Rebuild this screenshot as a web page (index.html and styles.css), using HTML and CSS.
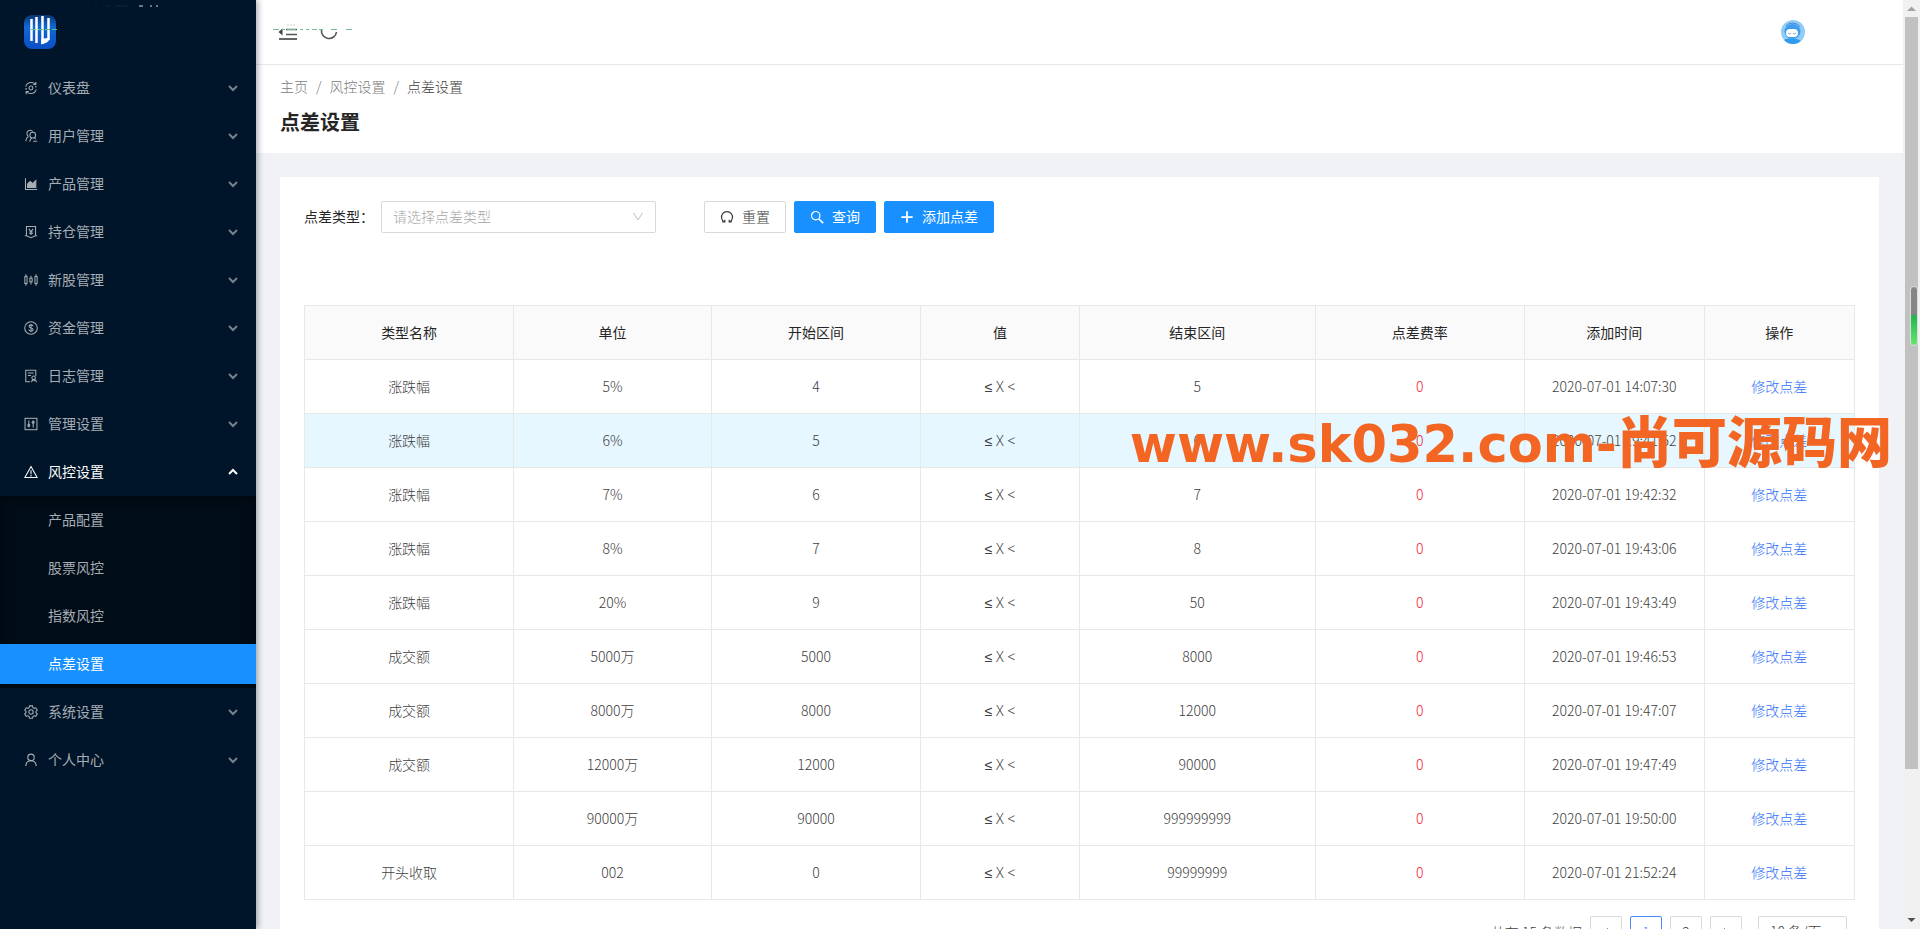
FILE: index.html
```html
<!DOCTYPE html>
<html lang="zh-CN">
<head>
<meta charset="utf-8">
<title>点差设置</title>
<link rel="stylesheet" href="styles.css">
</head>
<body>
<svg class="sprite" aria-hidden="true">
  <symbol id="down" viewBox="0 0 10 10"><path d="M1 3l4 4 4-4" fill="none" stroke="currentColor" stroke-width="2"/></symbol>
  <symbol id="up" viewBox="0 0 10 10"><path d="M1 7l4-4 4 4" fill="none" stroke="currentColor" stroke-width="2"/></symbol>
</svg>
<div class="app">
  <aside class="sidebar">
    <div class="brand">
      <svg class="logo" viewBox="0 0 36 38" aria-hidden="true">
        <defs><linearGradient id="blue" x1="0" y1="0" x2="0" y2="1"><stop offset="0" stop-color="#08366f"/><stop offset=".35" stop-color="#1268d8"/><stop offset="1" stop-color="#0b4fc4"/></linearGradient></defs>
        <rect x="2" y="2" width="32" height="34" rx="8" fill="url(#blue)"/>
        <path d="M9.500 6v22M14.500 4v26M20.500 3v28M26.500 5v22" fill="none" stroke="#fff" stroke-width="2.500"/>
        <path d="M19.300 26l6-1 2.500 1.500-3 3-5.500 2z" fill="#fff"/>
        <path d="M9 16.500h29" stroke="#5fbf7c" stroke-width="1" stroke-dasharray="5 2"/>
      </svg>
      <svg class="brand-mark" viewBox="0 0 64 4" aria-hidden="true"><path d="M0 2h2m10 0h3m5 0h12" stroke="#0f2a42"/><path d="M44 2h4m7 0h2m4 0h2" stroke="#8796a3" stroke-width="1.500"/></svg>
    </div>
    <nav class="menu">
      <button class="item"><svg class="ico" viewBox="0 0 16 16"><circle cx="8" cy="8" r="2.200"/><path d="M2 6.500C3 3 6 1.500 9 1.800c2 .2 3.500 1 4.500 2.200M13.500 1v3h-3M14 9.500C13 13 10 14.500 7 14.200c-2-.2-3.500-1-4.500-2.200M2.500 15v-3h3M1.500 9h2M14.500 6.500h-2"/></svg><span>仪表盘</span><svg class="arrow"><use href="#down"/></svg></button>
      <button class="item"><svg class="ico" viewBox="0 0 16 16"><path d="M2 14c.2-3 1.400-4.500 3-5.500M5 8.500C3 7 2.800 4 4.500 2.500S9 1 10 3"/><circle cx="10" cy="7" r="3.300"/><path d="M6.500 14.500c.2-2.500 1-3.500 2.500-4.300M10.500 14h4.500M12 10l1.500 1.500"/></svg><span>用户管理</span><svg class="arrow"><use href="#down"/></svg></button>
      <button class="item"><svg class="ico" viewBox="0 0 16 16"><path d="M1.700 1.500v12.800H15"/><path d="M4 12V8l3-3 3 2.500L13.500 4v8z" fill="currentColor"/></svg><span>产品管理</span><svg class="arrow"><use href="#down"/></svg></button>
      <button class="item"><svg class="ico" viewBox="0 0 16 16"><path d="M2.800 12V1.700h10.400V12M1 12.200h2l5 2.300 5-2.300h2M5.500 4.500L8 7.500l2.500-3M8 7.500v4M6 8h4M6 9.800h4"/></svg><span>持仓管理</span><svg class="arrow"><use href="#down"/></svg></button>
      <button class="item"><svg class="ico" viewBox="0 0 16 16"><rect x="1" y="4" width="2.500" height="8"/><rect x="6.700" y="6" width="2.600" height="4"/><rect x="12.500" y="4" width="2.500" height="8"/><path d="M2.200 1.500V4M2.200 12v2.500M8 3v3M8 10v3M13.700 1.500V4M13.700 12v2.500"/></svg><span>新股管理</span><svg class="arrow"><use href="#down"/></svg></button>
      <button class="item"><svg class="ico" viewBox="0 0 16 16"><circle cx="8" cy="8" r="7.200"/><path d="M10.300 6c-.2-1.200-1-1.600-2.300-1.600S5.700 5 5.700 6.100c0 2.600 4.700 1.200 4.700 3.800 0 1.200-1 1.700-2.400 1.700S5.700 11 5.600 9.800M8 3.300v9.400"/></svg><span>资金管理</span><svg class="arrow"><use href="#down"/></svg></button>
      <button class="item"><svg class="ico" viewBox="0 0 16 16"><path d="M7 14.500H2v-13h11.500V8M4.500 4.500H11M4.500 7.500H8"/><circle cx="11" cy="10" r="2"/><path d="M8.500 15l1.500-3.300M14.500 15L12 11.500M9.500 13.500l1.500-1 1.500 1"/></svg><span>日志管理</span><svg class="arrow"><use href="#down"/></svg></button>
      <button class="item"><svg class="ico" viewBox="0 0 16 16"><rect x="1.200" y="1.500" width="13.600" height="13"/><path d="M5.500 4v8M10.500 4v8"/><circle cx="5.500" cy="9.500" r="1.200"/><circle cx="10.500" cy="6" r="1.200"/></svg><span>管理设置</span><svg class="arrow"><use href="#down"/></svg></button>
      <button class="item open" aria-expanded="true"><svg class="ico" viewBox="0 0 16 16"><path d="M8 1.700L15 14.300H1zM8 6v4.500M8 11.500V13"/></svg><span>风控设置</span><svg class="arrow"><use href="#up"/></svg></button>
      <div class="submenu">
        <a class="sub" href="#">产品配置</a>
        <a class="sub" href="#">股票风控</a>
        <a class="sub" href="#">指数风控</a>
        <a class="sub active" href="#">点差设置</a>
      </div>
      <button class="item"><svg class="ico" viewBox="0 0 16 16"><path d="M6.300 1h3.400l.5 2 1.300.8 2-.6L15.200 6l-1.500 1.400v1.400l1.500 1.300-1.700 2.800-2-.6-1.300.8-.5 2H6.300l-.5-2-1.300-.8-2 .6L.8 10.100l1.500-1.300V7.400L.8 6l1.700-2.800 2 .6L5.800 3z"/><circle cx="8" cy="8" r="2.500"/></svg><span>系统设置</span><svg class="arrow"><use href="#down"/></svg></button>
      <button class="item"><svg class="ico" viewBox="0 0 16 16"><circle cx="8" cy="5" r="3.700"/><path d="M2 15c.2-4 2.700-6.200 6-6.200s5.800 2.200 6 6.200"/></svg><span>个人中心</span><svg class="arrow"><use href="#down"/></svg></button>
    </nav>
  </aside>

  <main class="main">
    <header class="topbar">
      <svg class="tools" viewBox="0 0 84 24" role="img" aria-label="折叠与刷新">
        <path d="M6 19h18" stroke="#666" stroke-width="2"/>
        <path d="M13 9.500h11M13 14.500h11" stroke="#555" stroke-width="1.500"/>
        <path d="M5.500 12l4-3.500v7z" fill="#444"/>
        <path d="M48.500 10a7.500 7.500 0 0 0 15 2" fill="none" stroke="#555" stroke-width="1.600"/>
        <path d="M14 5h9" stroke="#ccc" stroke-dasharray="2 1"/>
        <path d="M0 9.500h6m3 0h3m2 0h9m4 0h3m3 0h3m3 0h5m2 0h4m8 0h6m9 0h6" stroke="#74bd91"/>
      </svg>
      <svg class="avatar" viewBox="0 0 24 24" role="img" aria-label="头像">
        <circle cx="12" cy="12" r="12" fill="#8fccf8"/>
        <path d="M3 20c4-2 12-2 17 1a12 12 0 0 1-17-1z" fill="#2f9bea"/>
        <ellipse cx="11.500" cy="11.500" rx="8" ry="7.500" fill="#3f9df0"/>
        <path d="M5 6c3-4 11-4 14 1" fill="none" stroke="#4f7fd0"/>
        <rect x="5" y="9" width="12" height="8" rx="4" fill="#fff"/>
        <path d="M7 13q1.500 2 3 0M12 13q1.500 2 3 0" fill="none" stroke="#8aa0d8"/>
      </svg>
    </header>
    <section class="page-head">
      <nav class="crumbs"><a href="#">主页</a><i>/</i><a href="#">风控设置</a><i>/</i><span>点差设置</span></nav>
      <h1>点差设置</h1>
    </section>
    <section class="card">
      <form class="filters">
        <label for="kind">点差类型：</label>
        <span class="select-wrap">
          <select id="kind"><option>请选择点差类型</option></select>
          <svg class="caret" viewBox="0 0 12 12"><path d="M1.500 2L6 9l4.500-7" fill="none" stroke="currentColor"/></svg>
        </span>
        <div class="actions">
          <button type="button" class="btn"><svg viewBox="0 0 16 16"><path d="M5.300 13.800A6.300 6.300 0 1 1 10.700 13.800M2.500 13.500h3V11M13.500 13.500h-3V11"/></svg><span>重置</span></button>
          <button type="button" class="btn primary"><svg viewBox="0 0 16 16"><circle cx="6.500" cy="6.500" r="4.800"/><path d="M10 10l5 5" stroke-width="2"/></svg><span>查询</span></button>
          <button type="button" class="btn primary"><svg viewBox="0 0 16 16"><path d="M8 1.500v13M1.500 8h13" stroke-width="2"/></svg><span>添加点差</span></button>
        </div>
      </form>
      <div class="table-area">
      <table>
        <colgroup><col class="c-type"><col class="c-unit"><col class="c-from"><col class="c-val"><col class="c-to"><col class="c-rate"><col class="c-time"><col class="c-op"></colgroup>
        <thead><tr><th>类型名称</th><th>单位</th><th>开始区间</th><th>值</th><th>结束区间</th><th>点差费率</th><th>添加时间</th><th>操作</th></tr></thead>
        <tbody>
          <tr><td>涨跌幅</td><td>5%</td><td>4</td><td class="cmp">≤ X &lt;</td><td>5</td><td class="rate">0</td><td>2020-07-01 14:07:30</td><td><a href="#">修改点差</a></td></tr>
          <tr class="hover"><td>涨跌幅</td><td>6%</td><td>5</td><td class="cmp">≤ X &lt;</td><td>6</td><td class="rate">0</td><td>2020-07-01 19:41:52</td><td><a href="#">修改点差</a></td></tr>
          <tr><td>涨跌幅</td><td>7%</td><td>6</td><td class="cmp">≤ X &lt;</td><td>7</td><td class="rate">0</td><td>2020-07-01 19:42:32</td><td><a href="#">修改点差</a></td></tr>
          <tr><td>涨跌幅</td><td>8%</td><td>7</td><td class="cmp">≤ X &lt;</td><td>8</td><td class="rate">0</td><td>2020-07-01 19:43:06</td><td><a href="#">修改点差</a></td></tr>
          <tr><td>涨跌幅</td><td>20%</td><td>9</td><td class="cmp">≤ X &lt;</td><td>50</td><td class="rate">0</td><td>2020-07-01 19:43:49</td><td><a href="#">修改点差</a></td></tr>
          <tr><td>成交额</td><td>5000万</td><td>5000</td><td class="cmp">≤ X &lt;</td><td>8000</td><td class="rate">0</td><td>2020-07-01 19:46:53</td><td><a href="#">修改点差</a></td></tr>
          <tr><td>成交额</td><td>8000万</td><td>8000</td><td class="cmp">≤ X &lt;</td><td>12000</td><td class="rate">0</td><td>2020-07-01 19:47:07</td><td><a href="#">修改点差</a></td></tr>
          <tr><td>成交额</td><td>12000万</td><td>12000</td><td class="cmp">≤ X &lt;</td><td>90000</td><td class="rate">0</td><td>2020-07-01 19:47:49</td><td><a href="#">修改点差</a></td></tr>
          <tr><td></td><td>90000万</td><td>90000</td><td class="cmp">≤ X &lt;</td><td>999999999</td><td class="rate">0</td><td>2020-07-01 19:50:00</td><td><a href="#">修改点差</a></td></tr>
          <tr><td>开头收取</td><td>002</td><td>0</td><td class="cmp">≤ X &lt;</td><td>99999999</td><td class="rate">0</td><td>2020-07-01 21:52:24</td><td><a href="#">修改点差</a></td></tr>
        </tbody>
      </table>
      <p class="watermark">www.sk032.com-<span>尚可源码网</span></p>
      </div>
      <div class="pager">
        <span>共有 15 条数据</span>
        <button class="page" aria-label="上一页"><svg viewBox="0 0 12 12"><path d="M8 2L4 6l4 4"/></svg></button>
        <button class="page current">1</button>
        <button class="page">2</button>
        <button class="page" aria-label="下一页"><svg viewBox="0 0 12 12"><path d="M4 2l4 4-4 4"/></svg></button>
        <span class="select-wrap size">
          <select aria-label="每页条数"><option>10 条/页</option></select>
          <svg class="caret" viewBox="0 0 12 12"><path d="M1.500 3.500L6 8.500l4.500-5" fill="none" stroke="currentColor"/></svg>
        </span>
      </div>
    </section>
  </main>

  <div class="scrollbar" aria-hidden="true">
    <svg viewBox="0 0 17 17"><path d="M4 11l4.500-4.500L13 11z" fill="#a3a3a3"/></svg>
    <div class="track"><div class="thumb"></div></div>
    <svg viewBox="0 0 17 17"><path d="M4.500 6h8L8.500 10z" fill="#505050"/></svg>
    <div class="meter"></div>
  </div>
</div>
</body>
</html>
```
FILE: styles.css
```css
* { box-sizing: border-box; }
body {
  margin: 0;
  font: 14px/22px "Noto Sans CJK SC", sans-serif;
  font-weight: 300;
  color: #404040;
  background: #f0f2f5;
}
button, select { font: inherit; color: inherit; }
a { text-decoration: none; color: inherit; }
.sprite { display: none; }

.app { display: flex; height: 100vh; overflow: hidden; }

/* Sidebar */
.sidebar {
  position: relative;
  z-index: 2;
  flex: 0 0 256px;
  background: #001529;
  color: #a6adb4;
  font-weight: 400;
  box-shadow: 2px 0 6px rgba(0, 21, 41, .35);
}
.brand { position: relative; height: 64px; padding: 13px 22px; }
.logo { width: 36px; height: 38px; display: block; }
.brand-mark { position: absolute; top: 4px; left: 95px; width: 64px; height: 4px; }
.item {
  display: flex;
  align-items: center;
  gap: 10px;
  width: 100%;
  height: 48px;
  padding: 0 18px 0 24px;
  border: 0;
  background: none;
  text-align: left;
}
.item span { flex: 1; padding-bottom: 2px; }
.item.open { color: #fff; }
.ico { width: 14px; height: 14px; fill: none; stroke: currentColor; stroke-width: 1.2px; }
.arrow { width: 10px; height: 10px; opacity: .7; }
.open .arrow { opacity: 1; }
.submenu {
  display: grid;
  gap: 8px;
  padding: 4px 0;
  background: #000c17;
  box-shadow: inset 0 2px 8px rgba(0, 0, 0, .45);
}
.sub { height: 40px; padding: 8px 0 10px 48px; }
.sub.active { background: #1890ff; color: #fff; }

/* Main column */
.main { flex: 1; min-width: 0; overflow: hidden; }
.topbar {
  display: flex;
  align-items: center;
  justify-content: space-between;
  height: 64px;
  padding: 0 98px 0 17px;
  background: #fff;
}
.tools { width: 84px; height: 24px; }
.avatar { width: 24px; height: 24px; }
.page-head {
  padding: 10px 24px 16px;
  border-top: 1px solid #e8e8e8;
  background: #fff;
}
.crumbs { display: flex; gap: 8px; color: #7c7c7c; }
.crumbs i { font-style: normal; }
.crumbs span { color: #404040; }
h1 { margin: 10px 0 0; font-size: 20px; line-height: 30px; font-weight: 700; color: #262626; }

.card { margin: 24px; padding: 24px; background: #fff; }
.filters { display: flex; align-items: center; margin-bottom: 72px; color: #262626; }
.filters label { width: 77px; padding-bottom: 2px; white-space: nowrap; font-weight: 400; }
.select-wrap { position: relative; width: 275px; }
.select-wrap select {
  appearance: none;
  display: block;
  width: 100%;
  height: 32px;
  padding: 0 11px 2px;
  border: 1px solid #d9d9d9;
  border-radius: 2px;
  background: #fff;
  color: #a6a6a6;
}
.caret { position: absolute; top: 10px; right: 12px; width: 12px; height: 12px; color: #bfbfbf; }
.actions { display: flex; gap: 8px; margin-left: 48px; }
.btn {
  display: flex;
  align-items: center;
  gap: 8px;
  height: 32px;
  padding: 0 15px;
  border: 1px solid #d9d9d9;
  border-radius: 2px;
  background: #fff;
  color: #404040;
}
.btn span { padding-bottom: 2px; }
.btn svg { width: 14px; height: 14px; fill: none; stroke: currentColor; stroke-width: 1.4px; }
.btn.primary { border-color: #1890ff; background: #1890ff; color: #fff; font-weight: 400; }

/* Table */
.table-area { position: relative; }
table { width: 100%; table-layout: fixed; border-collapse: collapse; text-align: center; }
th, td { height: 54px; padding: 0 16px 2px; border: 1px solid #e8e8e8; }
th { background: #fafafa; color: #262626; font-weight: 400; }
.c-type, .c-from, .c-rate { width: 13.5%; }
.c-unit { width: 12.75%; }
.c-val { width: 10.25%; }
.c-to { width: 15.2%; }
.c-time { width: 11.6%; }
.hover td { background: #e6f7ff; }
.cmp { padding-bottom: 0; font-family: "Noto Sans", sans-serif; }
.rate { color: #f5222d; }
td a { color: #2f6ffa; }
.watermark {
  position: absolute;
  top: 103px;
  right: -37px;
  margin: 0;
  font: 700 51px/60px "DejaVu Sans", "Noto Sans CJK SC", sans-serif;
  color: #f26522;
  white-space: nowrap;
  pointer-events: none;
}
.watermark span { font-family: "Noto Sans CJK SC", sans-serif; font-size: 55px; font-weight: 900; }

/* Pagination */
.pager { display: flex; align-items: center; justify-content: flex-end; gap: 8px; padding: 16px 8px 0 0; }
.page { width: 32px; height: 32px; padding: 0; border: 1px solid #d9d9d9; border-radius: 2px; background: #fff; }
.page svg { width: 12px; height: 12px; fill: none; stroke: #8c8c8c; }
.page.current { border-color: #4a86f5; color: #4a86f5; }
.size { width: 89px; margin-left: 8px; }
.size select { color: #404040; }

/* Scroll rail */
.scrollbar { position: relative; z-index: 3; flex: 0 0 17px; display: flex; flex-direction: column; background: #f1f1f1; }
.scrollbar svg { width: 17px; height: 17px; }
.track { flex: 1; padding: 0 2px; }
.thumb { height: 84%; background: #c1c1c1; }
.meter {
  position: absolute;
  top: 286px;
  right: 2px;
  width: 8px;
  height: 60px;
  border: 1px solid #ddd;
  border-radius: 4px;
  background: linear-gradient(#858585 0 48%, #22b34c 48%, #62e86a);
}
```
